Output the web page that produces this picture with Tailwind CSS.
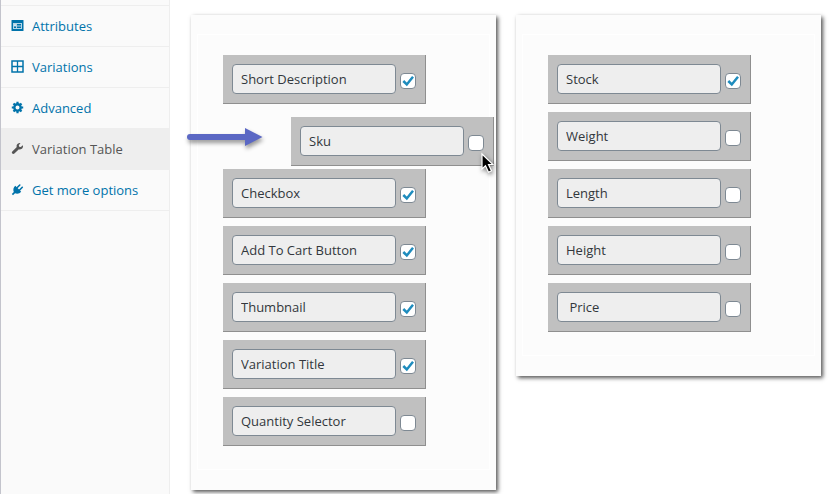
<!DOCTYPE html>
<html lang="en">
<head>
  <meta charset="UTF-8" />
  <meta name="viewport" content="width=device-width, initial-scale=1.0" />
  <title>Variation Table</title>
  <script src="https://cdn.jsdelivr.net/npm/@tailwindcss/browser@4"></script>
</head>
<body class="bg-white font-['Open_Sans','Noto_Sans',sans-serif] text-[13px] text-[#32373c]">

  <div class="flex min-h-screen">

    <!-- Product data tabs -->
    <nav class="w-[170px] shrink-0 bg-[#fafafa] border-l border-l-[#c3c4cc] border-r border-r-[#eeeeee] pt-[5px]">
      <ul class="border-t border-[#eeeeee] text-[#0073aa]">
        <li>
          <a href="#attributes" class="flex items-center gap-2 h-[41px] pt-0.5 pl-[10px] border-b border-[#eeeeee]">
            <svg class="w-[13px] h-[13px] mb-1" viewBox="0 0 13 13" fill="currentColor">
              <rect x="0.500" y="1" width="12" height="11" rx="0.500"/>
              <rect x="2" y="4" width="9" height="6" fill="#b5d5e6"/>
              <path d="M3 5h2v1.500H3zM6 5h4v1.500H6zM3 7.500h2V9H3zM6 7.500h4V9H6z"/>
              <path d="M3 5.200h2v1.500H3z" fill="#fff"/>
            </svg>
            <span>Attributes</span>
          </a>
        </li>
        <li>
          <a href="#variations" class="flex items-center gap-2 h-[41px] pt-0.5 pl-[10px] border-b border-[#eeeeee]">
            <svg class="w-[13px] h-[13px] mb-1" viewBox="0 0 13 13" fill="none" stroke="currentColor">
              <rect x="1" y="1" width="11" height="11" stroke-width="1.5"/>
              <path d="M6.5 1v11M1 6.5h11" stroke-width="1.3"/>
            </svg>
            <span>Variations</span>
          </a>
        </li>
        <li>
          <a href="#advanced" class="flex items-center gap-2 h-[41px] pt-0.5 pl-[10px] border-b border-[#eeeeee]">
            <svg class="w-[13px] h-[13px] mb-1" viewBox="0 0 13 13" fill="none" stroke="currentColor">
              <circle cx="6.5" cy="6.5" r="3.2" stroke-width="2.4"/>
              <path d="M6.5 .8v2M6.5 10.2v2M.8 6.5h2M10.2 6.5h2M2.5 2.5l1.4 1.4M9.1 9.1l1.4 1.4M2.5 10.5l1.4-1.4M9.1 3.9l1.4-1.4" stroke-width="2.2"/>
            </svg>
            <span>Advanced</span>
          </a>
        </li>
        <li>
          <a href="#variation-table" class="flex items-center gap-2 h-[41px] pt-0.5 pl-[10px] border-b border-[#eeeeee] bg-[#eeeeee] text-[#555555]">
            <svg class="w-[13px] h-[13px] mb-1" viewBox="0 0 13 13" fill="currentColor">
              <path d="M11.9 3.2 9.8 5 8.2 4.7 7.8 3.2 9.5 1.1C7.9.7 6 1.6 5.6 3.4c-.1.6 0 1.2.2 1.7L1.3 9.5c-.6.6-.6 1.5 0 2.1s1.5.6 2.1 0L7.9 7.2c2.3.9 4.8-1.3 4-4z"/>
            </svg>
            <span>Variation Table</span>
          </a>
        </li>
        <li>
          <a href="#more-options" class="flex items-center gap-2 h-[41px] pt-0.5 pl-[10px] border-b border-[#eeeeee]">
            <svg class="w-[13px] h-[13px] mb-1" viewBox="0 0 13 13" fill="currentColor">
              <path d="M4.3 2.8 10.2 8.7C8.7 10.5 6.2 11.2 4 10.2L2 12.2.8 11l2-2C1.8 6.8 2.5 4.3 4.3 2.8z"/>
              <path d="M6 4.8 8.8 2M8.4 7.2l2.9-2.9" fill="none" stroke="currentColor" stroke-width="1.6" stroke-linecap="round"/>
            </svg>
            <span>Get more options</span>
          </a>
        </li>
      </ul>
    </nav>

    <!-- Sortable column lists -->
    <main class="grow grid grid-cols-2 gap-5 items-start pt-[15px] pl-[21px] pr-[13px]">

      <section class="bg-[#fcfcfc] px-[6px] pt-[19px] pb-5 shadow-[2px_2px_4px_#555555]">
        <ul class="flex flex-col gap-2 border border-white pt-5 pb-[23px] pl-[25px]">
          <li class="flex w-[203px] h-[49px] p-[9px] gap-1 bg-[#c0c0c0] border-r border-b border-[#8f8f8f]">
            <input type="text" aria-label="Column name" value="Short Description" readonly class="w-[164px] h-[30px] px-2 pb-px rounded-[4px] border border-[#7e8993] bg-[#eeeeee]">
            <input type="checkbox" aria-label="Show Short Description" checked class="peer appearance-none size-4 mt-[9px] shrink-0 rounded-[4px] border border-[#7e8993] bg-white">
            <svg class="hidden peer-checked:block w-4 h-4 -ml-5 mt-[9px] shrink-0 pointer-events-none" viewBox="0 0 16 16" fill="none" stroke="#1e8cbe" stroke-width="2.5"><path d="M3.3 8 6.8 11.5 13 3.8"/></svg>
          </li>
          <li class="relative h-[49px]">
            <!-- row being dragged -->
            <div class="absolute left-[68px] top-[5px] flex w-[203px] h-[49px] p-[9px] gap-1 bg-[#c0c0c0] border-r border-b border-[#8f8f8f]">
              <input type="text" aria-label="Column name" value="Sku" readonly class="w-[164px] h-[30px] px-2 pb-px rounded-[4px] border border-[#7e8993] bg-[#eeeeee]">
              <input type="checkbox" aria-label="Show Sku" class="peer appearance-none size-4 mt-[9px] shrink-0 rounded-[4px] border border-[#7e8993] bg-white">
              <svg class="hidden peer-checked:block w-4 h-4 -ml-5 mt-[9px] shrink-0 pointer-events-none" viewBox="0 0 16 16" fill="none" stroke="#1e8cbe" stroke-width="2.5"><path d="M3.3 8 6.8 11.5 13 3.8"/></svg>
              <svg class="absolute left-[189px] top-[35px] w-[16px] h-[24px] overflow-visible drop-shadow-[1px_2px_2px_rgba(0,0,0,0.5)]" viewBox="0 0 16 24">
                <path d="M2 2v15l3.5-3.2 3 6.4 3-1.4-3-6.2H13z" fill="#000" stroke="#fff" stroke-width="1.2"/>
              </svg>
            </div>
            <svg class="absolute -left-9 top-[14px] w-[76px] h-[22px] overflow-visible drop-shadow-[1px_3px_2px_rgba(0,0,0,0.4)]" viewBox="0 0 76 22" fill="#5b68c4">
              <rect x="0" y="8" width="62" height="6" rx="3"/>
              <path d="M58 2 75.5 11 58 20z"/>
            </svg>
          </li>
          <li class="flex w-[203px] h-[49px] p-[9px] gap-1 bg-[#c0c0c0] border-r border-b border-[#8f8f8f]">
            <input type="text" aria-label="Column name" value="Checkbox" readonly class="w-[164px] h-[30px] px-2 pb-px rounded-[4px] border border-[#7e8993] bg-[#eeeeee]">
            <input type="checkbox" aria-label="Show Checkbox" checked class="peer appearance-none size-4 mt-[9px] shrink-0 rounded-[4px] border border-[#7e8993] bg-white">
            <svg class="hidden peer-checked:block w-4 h-4 -ml-5 mt-[9px] shrink-0 pointer-events-none" viewBox="0 0 16 16" fill="none" stroke="#1e8cbe" stroke-width="2.5"><path d="M3.3 8 6.8 11.5 13 3.8"/></svg>
          </li>
          <li class="flex w-[203px] h-[49px] p-[9px] gap-1 bg-[#c0c0c0] border-r border-b border-[#8f8f8f]">
            <input type="text" aria-label="Column name" value="Add To Cart Button" readonly class="w-[164px] h-[30px] px-2 pb-px rounded-[4px] border border-[#7e8993] bg-[#eeeeee]">
            <input type="checkbox" aria-label="Show Add To Cart Button" checked class="peer appearance-none size-4 mt-[9px] shrink-0 rounded-[4px] border border-[#7e8993] bg-white">
            <svg class="hidden peer-checked:block w-4 h-4 -ml-5 mt-[9px] shrink-0 pointer-events-none" viewBox="0 0 16 16" fill="none" stroke="#1e8cbe" stroke-width="2.5"><path d="M3.3 8 6.8 11.5 13 3.8"/></svg>
          </li>
          <li class="flex w-[203px] h-[49px] p-[9px] gap-1 bg-[#c0c0c0] border-r border-b border-[#8f8f8f]">
            <input type="text" aria-label="Column name" value="Thumbnail" readonly class="w-[164px] h-[30px] px-2 pb-px rounded-[4px] border border-[#7e8993] bg-[#eeeeee]">
            <input type="checkbox" aria-label="Show Thumbnail" checked class="peer appearance-none size-4 mt-[9px] shrink-0 rounded-[4px] border border-[#7e8993] bg-white">
            <svg class="hidden peer-checked:block w-4 h-4 -ml-5 mt-[9px] shrink-0 pointer-events-none" viewBox="0 0 16 16" fill="none" stroke="#1e8cbe" stroke-width="2.5"><path d="M3.3 8 6.8 11.5 13 3.8"/></svg>
          </li>
          <li class="flex w-[203px] h-[49px] p-[9px] gap-1 bg-[#c0c0c0] border-r border-b border-[#8f8f8f]">
            <input type="text" aria-label="Column name" value="Variation Title" readonly class="w-[164px] h-[30px] px-2 pb-px rounded-[4px] border border-[#7e8993] bg-[#eeeeee]">
            <input type="checkbox" aria-label="Show Variation Title" checked class="peer appearance-none size-4 mt-[9px] shrink-0 rounded-[4px] border border-[#7e8993] bg-white">
            <svg class="hidden peer-checked:block w-4 h-4 -ml-5 mt-[9px] shrink-0 pointer-events-none" viewBox="0 0 16 16" fill="none" stroke="#1e8cbe" stroke-width="2.5"><path d="M3.3 8 6.8 11.5 13 3.8"/></svg>
          </li>
          <li class="flex w-[203px] h-[49px] p-[9px] gap-1 bg-[#c0c0c0] border-r border-b border-[#8f8f8f]">
            <input type="text" aria-label="Column name" value="Quantity Selector" readonly class="w-[164px] h-[30px] px-2 pb-px rounded-[4px] border border-[#7e8993] bg-[#eeeeee]">
            <input type="checkbox" aria-label="Show Quantity Selector" class="peer appearance-none size-4 mt-[9px] shrink-0 rounded-[4px] border border-[#7e8993] bg-white">
            <svg class="hidden peer-checked:block w-4 h-4 -ml-5 mt-[9px] shrink-0 pointer-events-none" viewBox="0 0 16 16" fill="none" stroke="#1e8cbe" stroke-width="2.5"><path d="M3.3 8 6.8 11.5 13 3.8"/></svg>
          </li>
        </ul>
      </section>

      <section class="bg-[#fcfcfc] px-[6px] pt-[19px] pb-5 shadow-[2px_2px_4px_#555555]">
        <ul class="flex flex-col gap-2 border border-white pt-5 pb-[23px] pl-[25px]">
          <li class="flex w-[203px] h-[49px] p-[9px] gap-1 bg-[#c0c0c0] border-r border-b border-[#8f8f8f]">
            <input type="text" aria-label="Column name" value="Stock" readonly class="w-[164px] h-[30px] px-2 pb-px rounded-[4px] border border-[#7e8993] bg-[#eeeeee]">
            <input type="checkbox" aria-label="Show Stock" checked class="peer appearance-none size-4 mt-[9px] shrink-0 rounded-[4px] border border-[#7e8993] bg-white">
            <svg class="hidden peer-checked:block w-4 h-4 -ml-5 mt-[9px] shrink-0 pointer-events-none" viewBox="0 0 16 16" fill="none" stroke="#1e8cbe" stroke-width="2.5"><path d="M3.3 8 6.8 11.5 13 3.8"/></svg>
          </li>
          <li class="flex w-[203px] h-[49px] p-[9px] gap-1 bg-[#c0c0c0] border-r border-b border-[#8f8f8f]">
            <input type="text" aria-label="Column name" value="Weight" readonly class="w-[164px] h-[30px] px-2 pb-px rounded-[4px] border border-[#7e8993] bg-[#eeeeee]">
            <input type="checkbox" aria-label="Show Weight" class="peer appearance-none size-4 mt-[9px] shrink-0 rounded-[4px] border border-[#7e8993] bg-white">
            <svg class="hidden peer-checked:block w-4 h-4 -ml-5 mt-[9px] shrink-0 pointer-events-none" viewBox="0 0 16 16" fill="none" stroke="#1e8cbe" stroke-width="2.5"><path d="M3.3 8 6.8 11.5 13 3.8"/></svg>
          </li>
          <li class="flex w-[203px] h-[49px] p-[9px] gap-1 bg-[#c0c0c0] border-r border-b border-[#8f8f8f]">
            <input type="text" aria-label="Column name" value="Length" readonly class="w-[164px] h-[30px] px-2 pb-px rounded-[4px] border border-[#7e8993] bg-[#eeeeee]">
            <input type="checkbox" aria-label="Show Length" class="peer appearance-none size-4 mt-[9px] shrink-0 rounded-[4px] border border-[#7e8993] bg-white">
            <svg class="hidden peer-checked:block w-4 h-4 -ml-5 mt-[9px] shrink-0 pointer-events-none" viewBox="0 0 16 16" fill="none" stroke="#1e8cbe" stroke-width="2.5"><path d="M3.3 8 6.8 11.5 13 3.8"/></svg>
          </li>
          <li class="flex w-[203px] h-[49px] p-[9px] gap-1 bg-[#c0c0c0] border-r border-b border-[#8f8f8f]">
            <input type="text" aria-label="Column name" value="Height" readonly class="w-[164px] h-[30px] px-2 pb-px rounded-[4px] border border-[#7e8993] bg-[#eeeeee]">
            <input type="checkbox" aria-label="Show Height" class="peer appearance-none size-4 mt-[9px] shrink-0 rounded-[4px] border border-[#7e8993] bg-white">
            <svg class="hidden peer-checked:block w-4 h-4 -ml-5 mt-[9px] shrink-0 pointer-events-none" viewBox="0 0 16 16" fill="none" stroke="#1e8cbe" stroke-width="2.5"><path d="M3.3 8 6.8 11.5 13 3.8"/></svg>
          </li>
          <li class="flex w-[203px] h-[49px] p-[9px] gap-1 bg-[#c0c0c0] border-r border-b border-[#8f8f8f]">
            <input type="text" aria-label="Column name" value=" Price" readonly class="w-[164px] h-[30px] px-2 pb-px rounded-[4px] border border-[#7e8993] bg-[#eeeeee]">
            <input type="checkbox" aria-label="Show Price" class="peer appearance-none size-4 mt-[9px] shrink-0 rounded-[4px] border border-[#7e8993] bg-white">
            <svg class="hidden peer-checked:block w-4 h-4 -ml-5 mt-[9px] shrink-0 pointer-events-none" viewBox="0 0 16 16" fill="none" stroke="#1e8cbe" stroke-width="2.5"><path d="M3.3 8 6.8 11.5 13 3.8"/></svg>
          </li>
        </ul>
      </section>

    </main>
  </div>

</body>
</html>
